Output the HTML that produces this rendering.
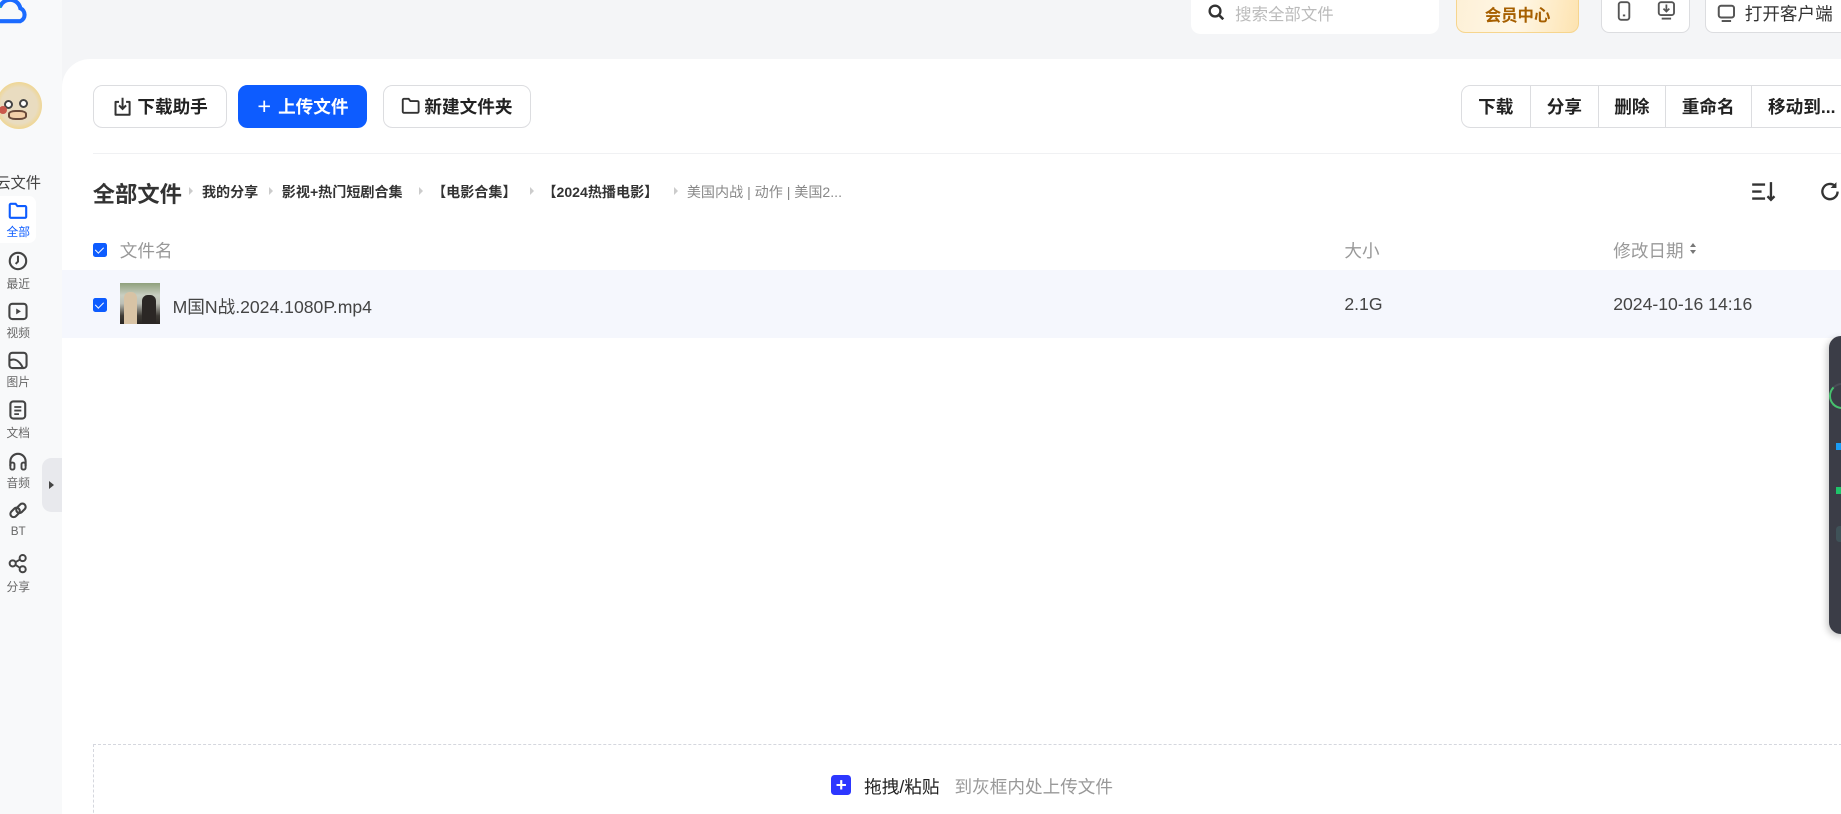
<!DOCTYPE html>
<html><head><meta charset="utf-8"><style>
*{box-sizing:border-box;margin:0;padding:0}
html,body{width:1841px;height:814px;overflow:hidden;background:#f4f5f7}
#w{zoom:1.17411;width:1568px;height:693px;position:relative;overflow:hidden;font-family:"Liberation Sans","Noto Sans CJK SC",sans-serif;color:#333;background:#f4f5f7}
.a{position:absolute}
.side{left:0;top:0;width:53px;height:693px;background:#f8f9fa}
.card{left:53px;top:50px;width:1530px;height:660px;background:#fff;border-top-left-radius:24px}
.btn{position:absolute;top:72px;height:37px;border:1px solid #dcdde0;border-radius:8px;background:#fff;font-weight:bold;font-size:15px;display:flex;align-items:center;justify-content:center;gap:4px;color:#222}
.grp{position:absolute;top:72px;left:1244px;height:37px;width:340px;border:1px solid #dcdde0;border-radius:8px;display:flex;font-weight:bold;font-size:15px;color:#222}
.grp div{display:flex;align-items:center;justify-content:center;border-right:1px solid #dcdde0}
.si{position:absolute;left:0;width:31px;text-align:center;font-size:10px;color:#666}
.si svg{display:block;margin:0 auto 3px}
.bc{position:absolute;top:155px;font-size:12px;font-weight:bold;color:#333}
.tri{display:inline-block;width:0;height:0;border-left:4px solid #ccc;border-top:3.5px solid transparent;border-bottom:3.5px solid transparent;position:absolute;top:159px}
.cb{position:absolute;width:12px;height:12px;border-radius:2px;background:#0d5cff}
.cb:after{content:"";position:absolute;left:3.5px;top:1.5px;width:3px;height:6px;border:solid #fff;border-width:0 1.6px 1.6px 0;transform:rotate(45deg)}
</style></head><body><div id="w">
<div class="a side"></div>
<svg class="a" style="left:-8px;top:-6px" width="32" height="28" viewBox="0 0 32 28"><path d="M6 24 a7 7 0 0 1 2-13 a9 9 0 0 1 17 2 a6 6 0 0 1 0 11 Z" fill="none" stroke="#1b6bff" stroke-width="3.5"/><path d="M6 24 a7 7 0 0 1 2-13" fill="none" stroke="#1dd46b" stroke-width="3.5"/></svg>
<div class="a" style="left:1014px;top:-10px;width:212px;height:39px;background:#fff;border-radius:8px"></div>
<svg class="a" style="left:1029px;top:3px" width="14" height="14" viewBox="0 0 14 14"><circle cx="6" cy="6" r="4.6" fill="none" stroke="#333" stroke-width="2"/><path d="M9.5 9.5 L13 13" stroke="#333" stroke-width="2.2"/></svg>
<div class="a" style="left:1052px;top:1px;font-size:14px;color:#bbb">搜索全部文件</div>
<div class="a" style="left:1240px;top:-10px;width:105px;height:38px;border:1px solid #f6d58e;border-radius:8px;background:linear-gradient(100deg,#fdf0d6,#fff7e6 50%,#fde3b0);color:#a65f00;font-weight:bold;font-size:14px;text-align:center;line-height:38px"><span style="position:relative;top:4px">会员中心</span></div>
<div class="a" style="left:1364px;top:-10px;width:75px;height:38px;border:1px solid #dcdde0;border-radius:7px;background:#fff"></div>
<svg class="a" style="left:1377px;top:1px" width="12" height="17" viewBox="0 0 12 17"><rect x="1.5" y="1" width="9" height="15" rx="2" fill="none" stroke="#555" stroke-width="1.6"/><rect x="5" y="11.5" width="2" height="1.6" fill="#555"/></svg>
<svg class="a" style="left:1411px;top:1px" width="16" height="17" viewBox="0 0 16 17"><rect x="1.5" y="1" width="13" height="11" rx="2" fill="none" stroke="#555" stroke-width="1.6"/><path d="M8 3v6M5.5 6.5 8 9l2.5-2.5" fill="none" stroke="#555" stroke-width="1.5"/><path d="M4 15h8" stroke="#555" stroke-width="1.6"/></svg>
<div class="a" style="left:1452px;top:-10px;width:130px;height:38px;border:1px solid #dcdde0;border-radius:7px;background:#fff"></div>
<svg class="a" style="left:1462px;top:3px" width="16" height="16" viewBox="0 0 16 16"><rect x="1.5" y="1.5" width="13" height="10" rx="2" fill="none" stroke="#555" stroke-width="1.7"/><path d="M4 14.5h8" stroke="#555" stroke-width="1.7"/></svg>
<div class="a" style="left:1486px;top:1px;font-size:15px;color:#333">打开客户端</div>

<div class="a card"></div>
<div class="a" style="left:-3px;top:70px;width:39px;height:40px;border-radius:50%;background:radial-gradient(circle at 50% 50%,#e9dcc0 55%,#f3d37a 80%,#f6e1a0);overflow:hidden">
<div class="a" style="left:6px;top:15px;width:8px;height:8px;border-radius:50%;background:#fff;border:2px solid #444"></div>
<div class="a" style="left:19px;top:14px;width:8px;height:8px;border-radius:50%;background:#fff;border:2px solid #444"></div>
<div class="a" style="left:10px;top:24px;width:16px;height:8px;border:2px solid #6a4a3a;border-radius:40%;background:#f3cfa8"></div>
<div class="a" style="left:2px;top:20px;width:7px;height:7px;border-radius:50%;background:#c9584b"></div>
</div>
<div class="a" style="left:-4px;top:146px;font-size:13px;color:#444">云文件</div>
<div class="a" style="left:0;top:167px;width:31px;height:40px;background:#fff;border-radius:0 6px 6px 0"></div>
<div class="si" style="top:172px;color:#0d5cff"><svg width="17" height="15" viewBox="0 0 17 15"><path d="M1.5 2.5a1 1 0 0 1 1-1h4l1.5 2h6.5a1 1 0 0 1 1 1v8a1 1 0 0 1-1 1h-12a1 1 0 0 1-1-1z" fill="none" stroke="#0d5cff" stroke-width="1.8"/></svg>全部</div>
<div class="si" style="top:214px"><svg width="17" height="17" viewBox="0 0 17 17"><circle cx="8.5" cy="8.5" r="7" fill="none" stroke="#444" stroke-width="1.8"/><path d="M8.5 4v5l-2 2" fill="none" stroke="#444" stroke-width="1.7"/></svg>最近</div>
<div class="si" style="top:257px"><svg width="17" height="16" viewBox="0 0 17 16"><rect x="1.2" y="1.5" width="14.6" height="13" rx="2.5" fill="none" stroke="#444" stroke-width="1.8"/><path d="M7 5.5v5l4-2.5z" fill="#444"/></svg>视频</div>
<div class="si" style="top:299px"><svg width="17" height="16" viewBox="0 0 17 16"><rect x="1.2" y="1.5" width="14.6" height="13" rx="2.5" fill="none" stroke="#444" stroke-width="1.8"/><path d="M1.5 8c4-2 8 0 11 6" fill="none" stroke="#444" stroke-width="1.7"/></svg>图片</div>
<div class="si" style="top:341px"><svg width="15" height="17" viewBox="0 0 15 17"><rect x="1.2" y="1.2" width="12.6" height="14.6" rx="2.5" fill="none" stroke="#444" stroke-width="1.8"/><path d="M4.5 6h6M4.5 9h6M4.5 12h4" stroke="#444" stroke-width="1.5"/></svg>文档</div>
<div class="si" style="top:385px"><svg width="17" height="16" viewBox="0 0 17 16"><path d="M2 12V8a6.5 6.5 0 0 1 13 0v4" fill="none" stroke="#444" stroke-width="1.8"/><rect x="2" y="9" width="3.5" height="6" rx="1.5" fill="none" stroke="#444" stroke-width="1.6"/><rect x="11.5" y="9" width="3.5" height="6" rx="1.5" fill="none" stroke="#444" stroke-width="1.6"/></svg>音频</div>
<div class="si" style="top:427px"><svg width="17" height="17" viewBox="0 0 17 17"><rect x="1.5" y="7" width="9" height="5.5" rx="2.7" transform="rotate(-45 6 9.7)" fill="none" stroke="#444" stroke-width="1.8"/><rect x="6.5" y="3.5" width="9" height="5.5" rx="2.7" transform="rotate(-45 11 6.2)" fill="none" stroke="#444" stroke-width="1.8"/></svg>BT</div>
<div class="si" style="top:472px"><svg width="17" height="17" viewBox="0 0 17 17"><circle cx="4" cy="8" r="2.6" fill="none" stroke="#444" stroke-width="1.7"/><circle cx="12.5" cy="3.5" r="2.6" fill="none" stroke="#444" stroke-width="1.7"/><circle cx="12.5" cy="13" r="2.6" fill="none" stroke="#444" stroke-width="1.7"/><path d="M6.3 7 10.2 4.7M6.3 9.2l3.9 2.6" stroke="#444" stroke-width="1.6"/></svg>分享</div>
<div class="a" style="left:36px;top:390px;width:17px;height:46px;background:#e8e9ed;border-radius:8px 0 0 8px"></div>
<div class="a" style="left:42px;top:410px;width:0;height:0;border-left:5px solid #444;border-top:3.5px solid transparent;border-bottom:3.5px solid transparent"></div>

<div class="btn" style="left:79px;width:114px"><svg width="18" height="18" viewBox="0 0 18 18"><path d="M6 5H3v11h12V5h-3" fill="none" stroke="#333" stroke-width="1.7" stroke-linejoin="round"/><path d="M9 1.5v9M6 8l3 3 3-3" fill="none" stroke="#333" stroke-width="1.7"/></svg>下载助手</div>
<div class="btn" style="left:203px;width:110px;background:#0d5cff;border-color:#0d5cff;color:#fff"><span style="font-size:20px;font-weight:normal;margin-right:2px">+</span>上传文件</div>
<div class="btn" style="left:326px;width:126px"><svg width="16" height="15" viewBox="0 0 16 15"><path d="M1.5 2.5a1 1 0 0 1 1-1h4l1.5 2h6a1 1 0 0 1 1 1v8a1 1 0 0 1-1 1h-11.5a1 1 0 0 1-1-1z" fill="none" stroke="#333" stroke-width="1.6"/></svg>新建文件夹</div>
<div class="grp"><div style="width:59px">下载</div><div style="width:58px">分享</div><div style="width:57px">删除</div><div style="width:73px">重命名</div><div style="width:80px;border:none;justify-content:flex-start;padding-left:14px">移动到...</div></div>
<div class="a" style="left:79px;top:130px;width:1500px;height:1px;background:#f0f1f3"></div>

<div class="a" style="left:79px;top:151px;font-size:19px;font-weight:bold;color:#333">全部文件</div>
<i class="tri" style="left:161px"></i><div class="bc" style="left:172px">我的分享</div>
<i class="tri" style="left:229px"></i><div class="bc" style="left:240px">影视+热门短剧合集</div>
<i class="tri" style="left:357px"></i><div class="bc" style="left:368px">【电影合集】</div>
<i class="tri" style="left:451px"></i><div class="bc" style="left:462px">【2024热播电影】</div>
<i class="tri" style="left:574px"></i><div class="bc" style="left:585px;color:#888;font-weight:normal">美国内战 | 动作 | 美国2...</div>
<svg class="a" style="left:1491px;top:154px" width="22" height="18" viewBox="0 0 22 18"><path d="M1 3h11M1 9h8M1 15h11" stroke="#333" stroke-width="2"/><path d="M17 1v15M14 13l3 3 3-3" fill="none" stroke="#333" stroke-width="2"/></svg>
<svg class="a" style="left:1550px;top:154px" width="18" height="18" viewBox="0 0 18 18"><path d="M15 9a6.5 6.5 0 1 1-2-4.7" fill="none" stroke="#333" stroke-width="2"/><path d="M14 1v5h-5" fill="#333"/></svg>

<div class="cb" style="left:79px;top:207px"></div>
<div class="a" style="left:102px;top:203px;font-size:15px;color:#999">文件名</div>
<div class="a" style="left:1145px;top:203px;font-size:15px;color:#999">大小</div>
<div class="a" style="left:1374px;top:203px;font-size:15px;color:#999">修改日期</div>
<div class="a" style="left:1439px;top:207px;border-bottom:4px solid #777;border-left:3px solid transparent;border-right:3px solid transparent"></div>
<div class="a" style="left:1439px;top:213px;border-top:4px solid #777;border-left:3px solid transparent;border-right:3px solid transparent"></div>
<div class="a" style="left:53px;top:230px;width:1530px;height:58px;background:#f5f7fd"></div>
<div class="cb" style="left:79px;top:254px"></div>
<div class="a" style="left:102px;top:241px;width:34px;height:35px;background:linear-gradient(180deg,#8fa07c 0%,#c9cfc2 30%,#bdbfb6 50%,#3d3a35 80%,#2a2623);overflow:hidden">
<div class="a" style="left:4px;top:8px;width:11px;height:27px;background:#d8c3a5;border-radius:5px 5px 0 0"></div>
<div class="a" style="left:19px;top:10px;width:12px;height:25px;background:#2b2725;border-radius:5px 5px 0 0"></div>
</div>
<div class="a" style="left:147px;top:250px;font-size:15px;color:#444">M国N战.2024.1080P.mp4</div>
<div class="a" style="left:1145px;top:250px;font-size:15px;color:#444">2.1G</div>
<div class="a" style="left:1374px;top:250px;font-size:15px;color:#444">2024-10-16 14:16</div>

<div class="a" style="left:1558px;top:286px;width:30px;height:254px;background:#3b3d47;border-radius:10px;box-shadow:-2px 2px 6px rgba(0,0,0,.2)">
<div class="a" style="left:0;top:40px;width:22px;height:22px;border-radius:50%;border:2px solid #4a4d57;border-bottom-color:#47c26e;border-left-color:#47c26e"></div>
<div class="a" style="left:6px;top:91px;width:4px;height:6px;background:#1a9cf5"></div>
<div class="a" style="left:6px;top:129px;width:4px;height:6px;background:#1fc46a"></div>
<div class="a" style="left:6px;top:162px;width:10px;height:14px;background:#3f5258;border-radius:3px"></div>
</div>

<div class="a" style="left:79px;top:634px;width:1520px;height:80px;border:1.5px dashed #d5d7de;border-right:none;border-bottom:none"></div>
<div class="a" style="left:708px;top:660px;width:17px;height:17px;background:#2d37ff;border-radius:3px;color:#fff;font-size:16px;line-height:17px;text-align:center;font-weight:bold">+</div>
<div class="a" style="left:736px;top:659px;font-size:15px;color:#222">拖拽/粘贴</div>
<div class="a" style="left:813px;top:659px;font-size:15px;color:#999">到灰框内处上传文件</div>
</div></body></html>
